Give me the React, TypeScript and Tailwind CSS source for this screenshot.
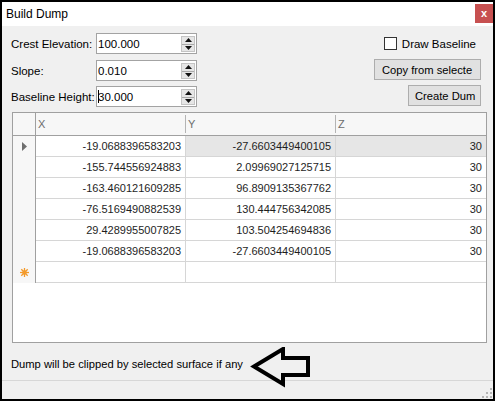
import React from 'react';

const rows: string[][] = [
    ['-19.0688396583203', '-27.6603449400105', '30'],
    ['-155.744556924883', '2.09969027125715', '30'],
    ['-163.460121609285', '96.8909135367762', '30'],
    ['-76.5169490882539', '130.444756342085', '30'],
    ['29.4289955007825', '103.504254694836', '30'],
    ['-19.0688396583203', '-27.6603449400105', '30'],
];

function Spinner() {
    return (
        <div className="mr-[1px] mt-[2px] mb-[1px] flex w-[14px] flex-col border border-[#c4c4c4]">
            <div className="flex flex-1 items-center justify-center border-b border-[#a8a8a8] bg-[#e6e6e6]">
                <svg width="7" height="4" viewBox="0 0 7 4">
                    <polygon points="3.5,0 7,4 0,4" fill="#111" />
                </svg>
            </div>
            <div className="flex flex-1 items-center justify-center bg-[#e6e6e6]">
                <svg width="7" height="4" viewBox="0 0 7 4">
                    <polygon points="0,0 7,0 3.5,4" fill="#111" />
                </svg>
            </div>
        </div>
    );
}

function NumberField({ label, value, caret }: { label: string; value: string; caret?: boolean }) {
    return (
        <div className="flex h-[21px] items-center">
            <div className="w-[94px] pl-[9px]">{label}</div>
            <div className="flex h-[21px] w-[101px] border border-[#a3a3a3] bg-white">
                <div className="flex flex-1 items-center pl-[1px]">
                    {caret && <span className="mr-[-1px] inline-block h-[13px] w-px bg-black" />}
                    {value}
                </div>
                <Spinner />
            </div>
        </div>
    );
}

function HeaderCell({ label, sep }: { label: string; sep?: boolean }) {
    return (
        <div className="flex w-[150px] items-center text-[#6d6d6d]">
            <div className="flex-1 pl-[2px]">{label}</div>
            {sep && <div className="h-[18px] w-px bg-[#b4b4b4]" />}
        </div>
    );
}

export default function App() {
    return (
        <div className="relative flex h-[401px] w-[495px] flex-col border-2 border-black bg-[#f0f0f0] font-['Liberation_Sans',Arial,sans-serif] text-[11.5px] leading-[14px] text-black">
            {/* Title bar */}
            <div className="flex h-[24px] items-start bg-white">
                <div className="pl-[4px] pt-[5px] text-[12px]">Build Dump</div>
                <div className="ml-auto mt-[2px] flex h-[19px] w-[18px] items-center justify-center bg-[#c75050] pb-[1px] text-[11px] font-bold leading-none text-white">
                    x
                </div>
            </div>

            {/* Body */}
            <div className="flex flex-1 flex-col">
                <div className="flex pt-[7px]">
                    <div className="flex flex-col">
                        <NumberField label="Crest Elevation:" value="100.000" />
                        <div className="mt-[6px]">
                            <NumberField label="Slope:" value="0.010" />
                        </div>
                        <div className="mt-[5px]">
                            <NumberField label="Baseline Height:" value="30.000" caret />
                        </div>
                    </div>
                    <div className="ml-auto flex flex-col items-end pr-[12px]">
                        <div className="mr-[5px] mt-[4px] flex h-[13px] items-center">
                            <div className="h-[13px] w-[13px] border border-[#333] bg-white" />
                            <span className="ml-[5px]">Draw Baseline</span>
                        </div>
                        <div className="mt-[9px] flex h-[21px] w-[107px] items-center whitespace-nowrap border border-[#adadad] bg-[#e1e1e1] pl-[7px] text-[11.2px]">
                            Copy from selecte
                        </div>
                        <div className="mt-[5px] flex h-[21px] w-[73px] items-center whitespace-nowrap border border-[#adadad] bg-[#e1e1e1] pl-[6px] text-[11.2px]">
                            Create Dum
                        </div>
                    </div>
                </div>

                {/* Grid */}
                <div className="ml-[10px] mt-[5px] flex h-[231px] w-[475px] flex-col border border-[#a0a0a0] bg-white text-[11px] text-[#1e1e1e]">
                    <div className="flex h-[23px] border-b border-[#a0a0a0] bg-[#f7f7f7]">
                        <div className="w-[23px] border-r border-[#a0a0a0]" />
                        <HeaderCell label="X" sep />
                        <HeaderCell label="Y" sep />
                        <HeaderCell label="Z" />
                    </div>
                    {rows.map((r, i) => (
                        <div key={i} className="flex h-[21px]">
                            <div className="flex w-[23px] items-center justify-center border-r border-[#a0a0a0] bg-[#f7f7f7]">
                                {i === 0 && (
                                    <svg width="5" height="9" viewBox="0 0 5 9">
                                        <polygon points="0,0 5,4.5 0,9" fill="#6f6f6f" />
                                    </svg>
                                )}
                            </div>
                            {r.map((v, j) => (
                                <div
                                    key={j}
                                    className={`flex w-[150px] items-center justify-end border-b border-[#d6d6d6] pr-[4px] ${j < 2 ? 'border-r' : ''} ${i === 0 && j > 0 ? 'bg-[#e6e6e6]' : ''}`}
                                >
                                    {v}
                                </div>
                            ))}
                        </div>
                    ))}
                    {/* New row */}
                    <div className="flex h-[21px]">
                        <div className="flex w-[23px] items-center justify-center border-r border-[#a0a0a0] bg-[#f7f7f7]">
                            <svg width="9" height="9" viewBox="0 0 9 9">
                                <g stroke="#f39a2b" strokeWidth="1.3">
                                    <line x1="4.5" y1="0" x2="4.5" y2="9" />
                                    <line x1="0" y1="4.5" x2="9" y2="4.5" />
                                    <line x1="1.3" y1="1.3" x2="7.7" y2="7.7" />
                                    <line x1="7.7" y1="1.3" x2="1.3" y2="7.7" />
                                </g>
                                <circle cx="4.5" cy="4.5" r="2.2" fill="#f39a2b" />
                            </svg>
                        </div>
                        <div className="w-[150px] border-b border-r border-[#d6d6d6]" />
                        <div className="w-[150px] border-b border-r border-[#d6d6d6]" />
                        <div className="w-[150px] border-b border-[#d6d6d6]" />
                    </div>
                    <div className="flex-1" />
                </div>

                <div className="pl-[9px] pt-[14px] text-[11.2px]">Dump will be clipped by selected surface if any</div>
            </div>

            {/* Status bar */}
            <div className="flex h-[19px] items-end justify-end border-t border-[#d7d7d7] pb-[1px] pr-[1px]">
                <svg width="10" height="10" viewBox="0 0 10 10">
                    <g fill="#b5b5b5">
                        <rect x="8" y="0" width="2" height="2" />
                        <rect x="4" y="4" width="2" height="2" />
                        <rect x="8" y="4" width="2" height="2" />
                        <rect x="0" y="8" width="2" height="2" />
                        <rect x="4" y="8" width="2" height="2" />
                        <rect x="8" y="8" width="2" height="2" />
                    </g>
                </svg>
            </div>

            {/* Annotation arrow */}
            <svg className="absolute left-[248px] top-[345px]" width="64" height="42" viewBox="0 0 64 42">
                <polygon
                    points="4,19.5 33,2 33,11 58,11 58,28 33,28 33,37"
                    fill="none"
                    stroke="#000"
                    strokeWidth="4"
                    strokeLinejoin="miter"
                />
            </svg>
        </div>
    );
}
